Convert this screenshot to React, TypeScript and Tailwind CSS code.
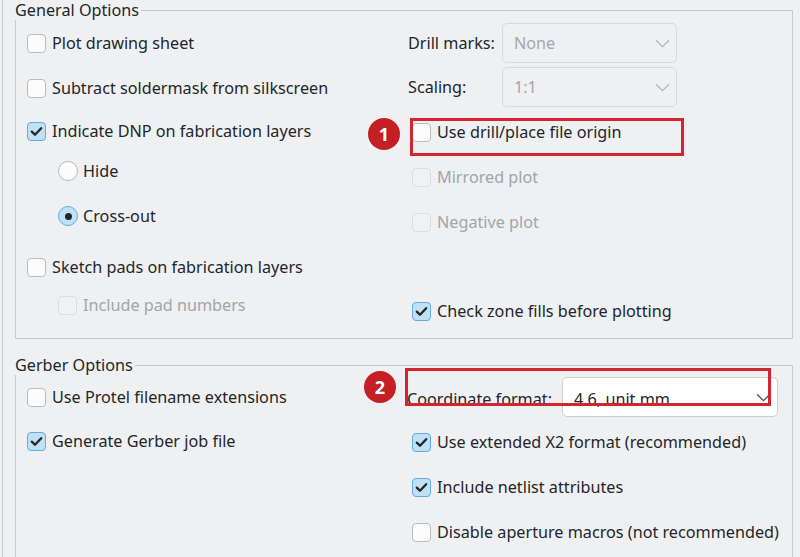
import React from "react";

type S = "on" | "off" | "dis";

function Box({ s }: { s: S }) {
  if (s === "on")
    return (
      <span className="w-[19px] h-[19px] rounded-[4px] border border-[#5eaee0] bg-[#c0e1f5] flex items-center justify-center shrink-0">
        <svg width="13" height="11" viewBox="0 0 13 11">
          <path d="M1.8 5.6 L5 8.8 L11.2 2.2" fill="none" stroke="#232629" strokeWidth="2.3" strokeLinecap="round" strokeLinejoin="round" />
        </svg>
      </span>
    );
  if (s === "dis")
    return <span className="w-[19px] h-[19px] rounded-[4px] border border-[#dcdddf] bg-[#f0f1f2] shrink-0" />;
  return <span className="w-[19px] h-[19px] rounded-[4px] border border-[#b8babc] bg-[#fcfcfc] shrink-0" />;
}

function Check({ s, label, className = "" }: { s: S; label: string; className?: string }) {
  return (
    <div className={`flex items-center h-[20px] gap-[6px] ${className}`}>
      <Box s={s} />
      <span className={s === "dis" ? "text-[#a3a5a7] whitespace-nowrap" : "whitespace-nowrap"}>{label}</span>
    </div>
  );
}

function Radio({ on, label, className = "" }: { on: boolean; label: string; className?: string }) {
  return (
    <div className={`flex items-center h-[20px] gap-[5px] ${className}`}>
      {on ? (
        <span className="w-[20px] h-[20px] rounded-full border border-[#5eaee0] bg-[#c0e1f5] flex items-center justify-center shrink-0">
          <span className="w-[7px] h-[7px] rounded-full bg-[#232629]" />
        </span>
      ) : (
        <span className="w-[20px] h-[20px] rounded-full border border-[#b8babc] bg-[#fcfcfc] shrink-0" />
      )}
      <span className="whitespace-nowrap">{label}</span>
    </div>
  );
}

function Chevron({ dark }: { dark?: boolean }) {
  return (
    <svg width="15" height="9" viewBox="0 0 15 9" className="shrink-0">
      <path d="M1 1.2 L7.5 7.6 L14 1.2" fill="none" stroke={dark ? "#4d5053" : "#b4b6b8"} strokeWidth="1.3" />
    </svg>
  );
}

function Combo({ value, disabled, width, textClass = "" }: { value: string; disabled?: boolean; width: string; textClass?: string }) {
  return (
    <div
      className={`${width} h-[40px] rounded-[5px] border flex items-center justify-between pl-[11px] pr-[6px] ${
        disabled ? "border-[#d9dadb] bg-[#eff0f1] text-[#a6a8aa]" : "border-[#cdcecf] bg-white text-[#232629]"
      }`}
    >
      <span className={`whitespace-nowrap ${textClass}`}>{value}</span>
      <Chevron dark={!disabled} />
    </div>
  );
}

function Group({ title, children, className = "" }: { title: string; children: React.ReactNode; className?: string }) {
  return (
    <fieldset className={`border border-[#c9cacb] m-0 p-0 min-w-0 ${className}`}>
      <legend className="-ml-px pr-[2px] leading-[20px] whitespace-nowrap">{title}</legend>
      {children}
    </fieldset>
  );
}

export default function App() {
  return (
    <div className="w-[800px] h-[557px] overflow-hidden bg-[#eff0f1] text-[#232629] font-['Noto_Sans',sans-serif] text-[16.2px] leading-[20px] relative">
      <div className="ml-[2px] h-full border-l border-[#c9cacb] pl-[12px] pr-[7px]">
        <Group title="General Options">
          <div className="flex h-[318px]">
            <div className="w-[392px] pl-[11px] flex flex-col">
              <Check s="off" label="Plot drawing sheet" className="mt-[13px]" />
              <Check s="off" label="Subtract soldermask from silkscreen" className="mt-[25px]" />
              <Check s="on" label="Indicate DNP on fabrication layers" className="mt-[23px]" />
              <Radio on={false} label="Hide" className="mt-[20px] ml-[31px]" />
              <Radio on={true} label="Cross-out" className="mt-[25px] ml-[31px]" />
              <Check s="off" label="Sketch pads on fabrication layers" className="mt-[31px]" />
              <Check s="dis" label="Include pad numbers" className="mt-[18px] ml-[31px]" />
            </div>
            <div className="flex-1 flex flex-col">
              <div className="flex items-center mt-[3px]">
                <span className="w-[94px] whitespace-nowrap">Drill marks:</span>
                <Combo value="None" disabled width="w-[175px]" />
              </div>
              <div className="flex items-center mt-[4px]">
                <span className="w-[94px] whitespace-nowrap">Scaling:</span>
                <Combo value="1:1" disabled width="w-[175px]" />
              </div>
              <Check s="off" label="Use drill/place file origin" className="mt-[15px] ml-[4px]" />
              <Check s="dis" label="Mirrored plot" className="mt-[25px] ml-[4px]" />
              <Check s="dis" label="Negative plot" className="mt-[25px] ml-[4px]" />
              <Check s="on" label="Check zone fills before plotting" className="mt-[69px] ml-[4px]" />
            </div>
          </div>
        </Group>
        <Group title="Gerber Options" className="mt-[16px]">
          <div className="flex h-[200px]">
            <div className="w-[391px] pl-[11px] flex flex-col">
              <Check s="off" label="Use Protel filename extensions" className="mt-[12px]" />
              <Check s="on" label="Generate Gerber job file" className="mt-[24px]" />
            </div>
            <div className="flex-1 flex flex-col">
              <div className="flex items-center mt-[2px]">
                <span className="w-[155px] whitespace-nowrap pt-[3px]">Coordinate format:</span>
                <Combo value="4.6, unit mm" width="w-[216px]" textClass="pt-[3px]" />
              </div>
              <Check s="on" label="Use extended X2 format (recommended)" className="mt-[15px] ml-[5px]" />
              <Check s="on" label="Include netlist attributes" className="mt-[25px] ml-[5px]" />
              <Check s="off" label="Disable aperture macros (not recommended)" className="mt-[25px] ml-[5px]" />
            </div>
          </div>
        </Group>
      </div>

      {/* annotations */}
      <div className="absolute left-[410px] top-[118px] w-[274px] h-[38px] border-[3px] border-[#d3252d]" />
      <div className="absolute left-[368px] top-[118px] w-[32px] h-[32px] rounded-full bg-[#c51f26] text-white font-bold text-[18px] leading-none flex items-center justify-center font-['Noto_Sans',sans-serif]">
        1
      </div>
      <div className="absolute left-[405px] top-[368px] w-[366px] h-[38px] border-[3px] border-[#d3252d]" />
      <div className="absolute left-[364px] top-[371px] w-[32px] h-[32px] rounded-full bg-[#c51f26] text-white font-bold text-[18px] leading-none flex items-center justify-center font-['Noto_Sans',sans-serif]">
        2
      </div>
    </div>
  );
}
